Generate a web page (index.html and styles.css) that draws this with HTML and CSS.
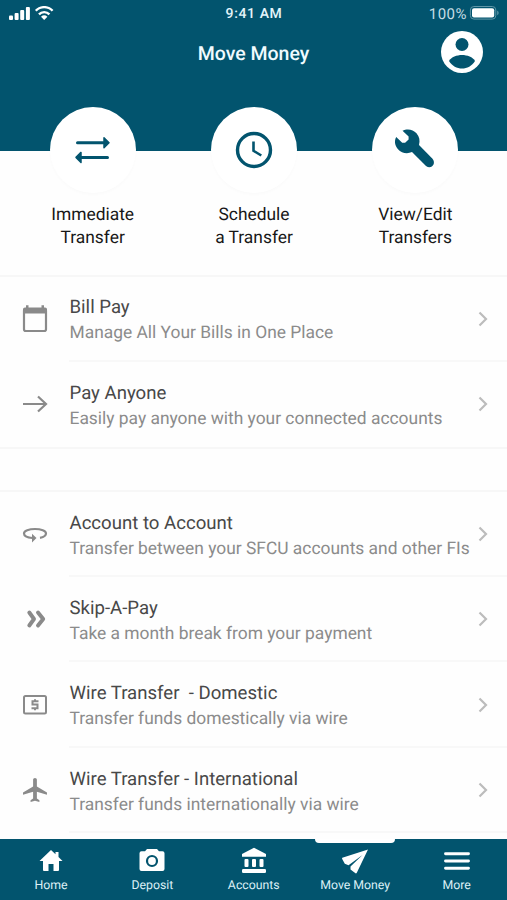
FILE: index.html
```html
<!DOCTYPE html>
<html lang="en">
<head>
<meta charset="utf-8">
<title>Move Money</title>
<link rel="stylesheet" href="styles.css">
</head>
<body>
<div class="app">
  <header class="header">
    <div class="status">
      <svg class="signals" width="48" height="18" viewBox="0 0 48 18" fill="#fff">
        <rect x="1" y="9.5" width="4" height="4.5" rx="1"/><rect x="6.6" y="7" width="4" height="7" rx="1"/><rect x="12.2" y="4" width="4" height="10" rx="1"/><rect x="17.9" y="1" width="4" height="13" rx="1"/>
        <g fill="none" stroke="#fff" stroke-width="2.4"><path d="M27.8 4.8a11.5 11.5 0 0 1 16.8 0M31 8.3a7.2 7.2 0 0 1 10.4 0"/></g>
        <path d="M33 10.7a4.7 4.7 0 0 1 6.4 0L36.2 14z"/>
      </svg>
      <span class="time">9:41 AM</span>
      <span class="battery"><span class="percent">100%</span>
        <svg width="31" height="16" viewBox="0 0 31 16"><rect x="1.400" y="1.500" width="25.400" height="12.600" rx="3.500" fill="none" stroke="#5e95a6"/><rect x="3" y="3.200" width="22.200" height="9.200" rx="2" fill="#fff"/><path d="M28.200 5.500c2 1.100 2 3.700 0 4.800z" fill="#5e95a6"/></svg>
      </span>
    </div>
    <div class="titlebar">
      <h1 class="title">Move Money</h1>
      <svg class="avatar" width="42" height="42" viewBox="0 0 42 42"><circle cx="21" cy="21" r="21" fill="#fff"/><circle cx="21" cy="13.500" r="6.500" fill="#02546e"/><path d="M8 30C10 26 16 24 21 24S32 26 34 30C31 35 26 37.500 21 37.500S11 35 8 30z" fill="#02546e"/></svg>
    </div>
  </header>

  <section class="actions">
    <a class="action">
      <span class="disc"><svg width="44" height="44" viewBox="0 0 44 44" fill="#02546e" stroke="#02546e" stroke-linejoin="round" stroke-linecap="round"><path d="M6.500 14.700H32.500M10.500 29.400H36.500" fill="none" stroke-width="3"/><path d="M33 9.700l5 5-5 5zM10 24.400l-5 5 5 5z" stroke-width="1.500"/></svg></span>
      <span class="action-label">Immediate<br>Transfer</span>
    </a>
    <a class="action">
      <span class="disc"><svg width="44" height="44" viewBox="0 0 44 44" fill="none" stroke="#02546e"><circle cx="22" cy="22" r="16.500" stroke-width="3.400"/><path d="M21.500 13.500v9.300l7.800 4.700" stroke-width="2.600"/></svg></span>
      <span class="action-label">Schedule<br>a Transfer</span>
    </a>
    <a class="action">
      <span class="disc"><svg width="44" height="44" viewBox="0 0 44 44"><path d="M9.500 2.800C14 .3 20 1.200 23.500 5.200C26.500 8.700 27.200 12.500 26 17L39.500 30.800C43.700 36 38 42 33 38L19 24C14 26.300 8.500 25 5 21.200C1.800 17.800 1.100 13 3.200 9.100L9.200 14.800H12.100L15.600 11.500V8.600Z" fill="#02546e"/></svg></span>
      <span class="action-label">View/Edit<br>Transfers</span>
    </a>
  </section>

  <main>
    <section class="group">
      <a class="row">
        <svg class="icon" viewBox="0 0 30 30"><rect x="4" y="5" width="22" height="22" rx="1.700" fill="none" stroke="#8a8a8a" stroke-width="2.200"/><path d="M3 9.500V5.500Q3 3.500 5 3.500H6V1.300H8.500V3.500H21.500V1.300H24V3.500H25Q27 3.500 27 5.500V9.500z" fill="#8a8a8a"/></svg>
        <span class="body"><span class="text"><span class="name">Bill Pay</span><span class="desc">Manage All Your Bills in One Place</span></span><svg class="chev" viewBox="0 0 10 16"><path d="M1.500 1.500L8 8l-6.500 6.500"/></svg></span>
      </a>
      <a class="row">
        <svg class="icon" viewBox="0 0 30 30" fill="none" stroke="#8a8a8a" stroke-width="2.200"><path d="M3 15H26M18 7.500L26 15l-8 7.500"/></svg>
        <span class="body"><span class="text"><span class="name">Pay Anyone</span><span class="desc">Easily pay anyone with your connected accounts</span></span><svg class="chev" viewBox="0 0 10 16"><path d="M1.500 1.500L8 8l-6.500 6.500"/></svg></span>
      </a>
    </section>
    <section class="group second">
      <a class="row">
        <svg class="icon" viewBox="0 0 30 30"><path d="M12.500 19C7 18.500 4 16.700 4 14.500C4 11.800 9 10 15 10S26 11.800 26 14.500C26 16.500 24 18 20 18.800" fill="none" stroke="#8a8a8a" stroke-width="2.200"/><path d="M12 14.800L16.500 19 12 23.500z" fill="#8a8a8a"/></svg>
        <span class="body"><span class="text"><span class="name">Account to Account</span><span class="desc">Transfer between your SFCU accounts and other FIs</span></span><svg class="chev" viewBox="0 0 10 16"><path d="M1.500 1.500L8 8l-6.500 6.500"/></svg></span>
      </a>
      <a class="row">
        <svg class="icon" viewBox="0 0 30 30" fill="none" stroke="#8a8a8a" stroke-width="3.900" stroke-linecap="round" stroke-linejoin="round"><path d="M9.300 8.500L14 15 9.300 21.500M18 8.500L23.200 15l-5.200 6.500"/></svg>
        <span class="body"><span class="text"><span class="name">Skip-A-Pay</span><span class="desc">Take a month break from your payment</span></span><svg class="chev" viewBox="0 0 10 16"><path d="M1.500 1.500L8 8l-6.500 6.500"/></svg></span>
      </a>
      <a class="row">
        <svg class="icon" viewBox="0 0 30 30" fill="none" stroke="#8a8a8a" stroke-width="2"><rect x="4" y="6" width="22" height="17.600" rx="1.500"/><path d="M18.500 11.300H12.500V14.600H17.500V18.200H11.500M15 9.300v2M15 18.300v2"/></svg>
        <span class="body"><span class="text"><span class="name">Wire Transfer&nbsp; - Domestic</span><span class="desc">Transfer funds domestically via wire</span></span><svg class="chev" viewBox="0 0 10 16"><path d="M1.500 1.500L8 8l-6.500 6.500"/></svg></span>
      </a>
      <a class="row">
        <svg class="icon" viewBox="0 0 30 30"><path transform="translate(.5 .6) scale(1.260 1.200)" fill="#8a8a8a" d="M21 16v-2l-8-5V3.500c0-.83-.67-1.500-1.500-1.500S10 2.670 10 3.500V9l-8 5v2l8-2.500V19l-2 1.500V22l3.500-1 3.500 1v-1.500L13 19v-5.500l8 2.500z"/></svg>
        <span class="body"><span class="text"><span class="name">Wire Transfer - International</span><span class="desc">Transfer funds internationally via wire</span></span><svg class="chev" viewBox="0 0 10 16"><path d="M1.500 1.500L8 8l-6.500 6.500"/></svg></span>
      </a>
    </section>
  </main>

  <nav class="nav">
    <a class="tab"><svg viewBox="0 0 28 28"><path d="M14 3L2.500 14H6v9q0 1 1 1h4.500v-7h5v7H21q1 0 1-1v-9h3.500L21.500 10V5H18.500V7.200z" fill="#fff"/></svg><span>Home</span></a>
    <a class="tab"><svg viewBox="0 0 28 28"><path fill="#fff" fill-rule="evenodd" d="M9 2h10l2 2.300h3.500q2 0 2 2V22q0 2-2 2h-21q-2 0-2-2V6.300q0-2 2-2H7zM14 7.900a6.100 6.100 0 1 0 0 12.200a6.100 6.100 0 1 0 0-12.200z"/><circle cx="14" cy="14" r="3.900" fill="#fff"/></svg><span>Deposit</span></a>
    <a class="tab"><svg viewBox="0 0 28 28" fill="#fff"><path d="M14 .8L26 7v2.800H2V7z"/><rect x="4.500" y="12" width="4" height="8" rx="1"/><rect x="12" y="12" width="4" height="8" rx="1"/><rect x="19.500" y="12" width="4" height="8" rx="1"/><rect x="2" y="22" width="24" height="4" rx="1.300"/></svg><span>Accounts</span></a>
    <a class="tab active"><svg viewBox="0 0 28 28"><path d="M27 2.500L1.300 10.800Q.8 11 1.200 12L3.800 16.700 7.500 18.200 21.500 8 9.500 19.600V22.500L14.500 26.300Q15.300 26.600 15.800 25.800z" fill="#fff"/></svg><span>Move Money</span></a>
    <a class="tab"><svg viewBox="0 0 28 28" fill="none" stroke="#fff" stroke-width="2.900" stroke-linecap="round"><path d="M2.500 6.800h23M2.500 14h23M2.500 21.200h23"/></svg><span>More</span></a>
  </nav>
</div>
</body>
</html>
```
FILE: styles.css
```css
* { box-sizing: border-box; }
body { margin: 0; background: #fefefe; font-family: Roboto, "Liberation Sans", sans-serif; text-rendering: geometricPrecision; }
svg { display: block; flex: none; }
.app { width: 507px; height: 900px; display: flex; flex-direction: column; overflow: hidden; }
.header { height: 151px; background: #02546e; color: #fff; flex: none; }
.status { height: 28px; display: grid; grid-template-columns: 1fr auto 1fr; align-items: center; padding: 0 8px; }
.signals { margin-top: 2px; }
.time { font-size: 14px; font-weight: 500; letter-spacing: .6px; padding: 0 0 0 1px; color: #e4f4fa; }
.battery { display: flex; justify-content: flex-end; align-items: center; gap: 2px; }
.percent { font-size: 15px; letter-spacing: .5px; color: #c6dde4; }
.battery svg { margin: -2px -1px 0 0; }
.titlebar { height: 48px; display: grid; grid-template-columns: 1fr auto 1fr; align-items: center; padding: 0 24px; }
.title { grid-column: 2; margin: 4px 0 0; font-size: 19.5px; font-weight: 500; line-height: 24px; color: #f0fbff; }
.avatar { justify-self: end; }
.actions { flex: none; height: 126px; padding: 0 11px 0 12px; display: grid; grid-template-columns: repeat(3, 1fr); border-bottom: 2px solid #f7f7f7; }
.action { display: flex; flex-direction: column; align-items: center; margin-top: -44px; }
.disc { width: 86px; height: 86px; border-radius: 50%; background: #fff; display: flex; align-items: center; justify-content: center; box-shadow: 0 2px 3px rgba(0, 0, 0, .015); }
.disc svg { margin-bottom: 1px; }
.action-label { margin-top: 11px; text-align: center; font-size: 17.4px; line-height: 22.5px; color: #171717; }
.row { display: flex; height: 85.5px; padding-left: 20px; align-items: stretch; }
.icon { width: 30px; height: 30px; align-self: center; margin-right: 19px; }
.body { flex: 1; display: flex; align-items: center; justify-content: space-between; padding-right: 19.5px; border-bottom: 2px solid #f8f8f8; }
.text { display: flex; flex-direction: column; white-space: nowrap; padding: 5px 0 0 .5px; }
.name { font-size: 18.6px; line-height: 26px; color: #484848; }
.desc { font-size: 17.4px; line-height: 26px; color: #8b8b8b; }
.chev { width: 10px; height: 16px; margin-top: 2px; fill: none; stroke: #bcbcbc; stroke-width: 2.2; }
.group:first-child .row:last-child .body { border-bottom-color: transparent; }
.group:first-child { border-bottom: 2px solid #f7f7f7; margin-top: -1px; }
.group:first-child .row:last-child { height: 85px; }
.second { margin-top: 41px; border-top: 2px solid #f7f7f7; margin-bottom: -10px; }
.second .row:first-child { height: 85px; }
.nav { margin-top: auto; flex: none; height: 61px; background: #02546e; display: grid; grid-template-columns: repeat(5, 1fr); }
.tab { position: relative; display: flex; flex-direction: column; align-items: center; padding: 8px 0 0 .6px; font-size: 12.3px; line-height: 16px; color: #ddf0f6; }
.tab svg { width: 28px; height: 28px; margin-bottom: 3px; }
.active::before { content: ""; position: absolute; top: 0; left: 11px; width: 80px; height: 4px; background: #fff; border-radius: 0 0 4px 4px; }
```
